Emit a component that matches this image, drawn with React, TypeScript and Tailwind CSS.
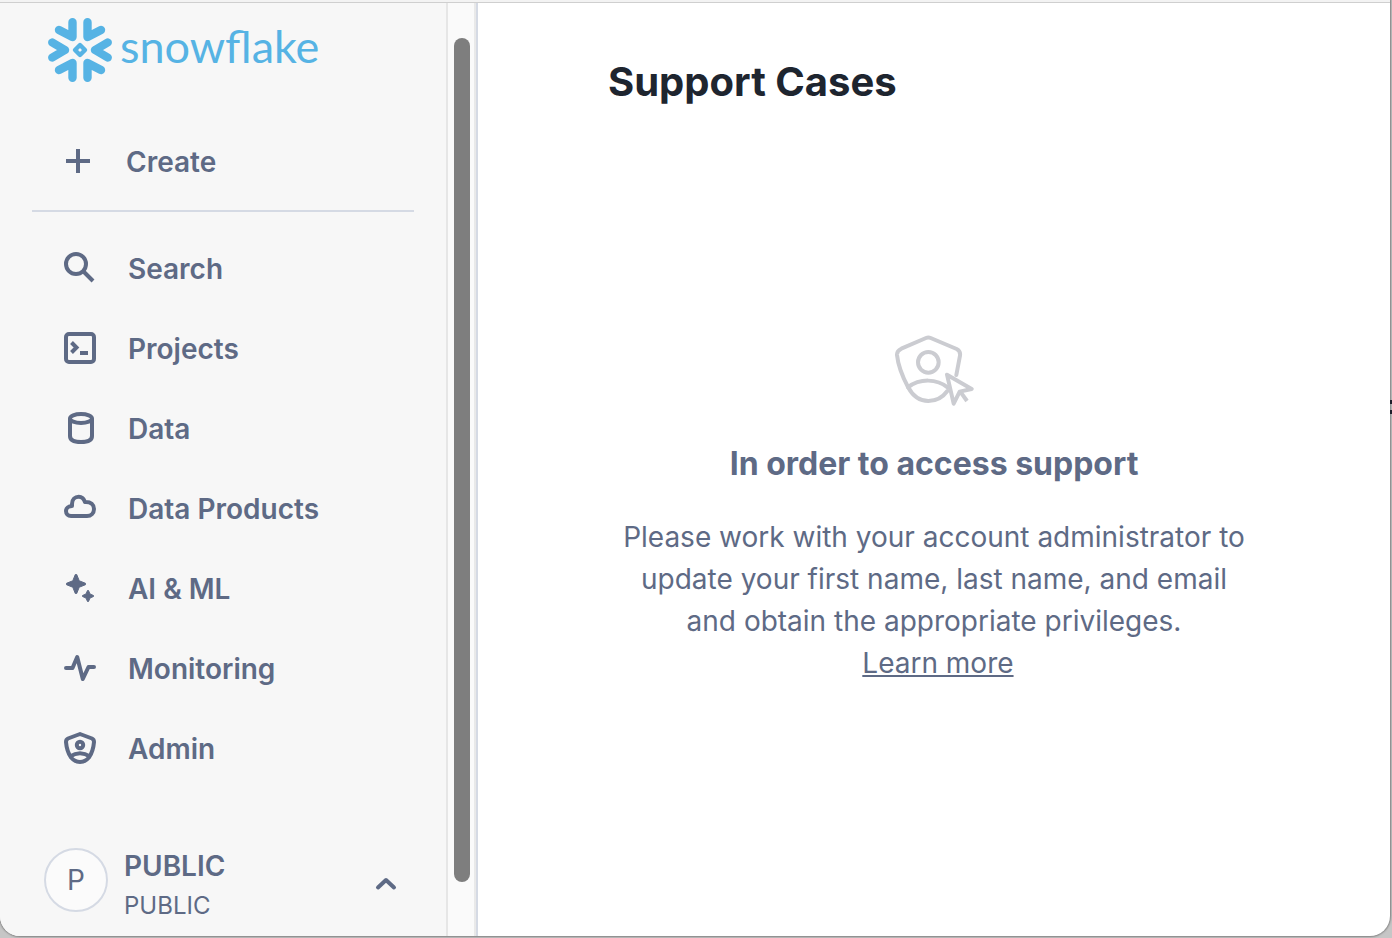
import type { ReactNode } from 'react';

type NavItem = {
  label: string;
  icon: ReactNode;
};

const NAV_ITEMS: NavItem[] = [
  {
    label: 'Search',
    icon: (
      <>
        <circle cx="12" cy="12" r="10" />
        <path d="M19 19L29 29" />
      </>
    ),
  },
  {
    label: 'Projects',
    icon: (
      <>
        <rect x="2" y="2" width="28" height="28" rx="3" />
        <path d="M7.5 10.5L12.5 15.5L7.5 20.5M16 21H24" />
      </>
    ),
  },
  {
    label: 'Data',
    icon: (
      <>
        <ellipse cx="17" cy="6.5" rx="11" ry="4.5" />
        <path d="M6 6.5V24C6 28 10 30 17 30S28 28 28 24V6.5" />
      </>
    ),
  },
  {
    label: 'Data Products',
    icon: (
      <path d="M7 24C4 24 2 21.8 2 19C2 16.2 4.5 14 8 14V12C8 7.5 11 4.8 14.8 4.8C18 4.8 20 7 21 10C27 9.6 30 13 30 17C30 21 27 24 23 24Z" strokeLinejoin="round" />
    ),
  },
  {
    label: 'AI & ML',
    icon: (
      <g fill="currentColor" strokeWidth="1" strokeLinejoin="round">
        <path d="M11.3 2.5H12.7L15 8.2Q15.3 8.7 15.8 9L21.5 11.3V12.7L15.8 15Q15.3 15.3 15 15.8L12.7 21.5H11.3L9 15.8Q8.7 15.3 8.2 15L2.5 12.7V11.3L8.2 9Q8.7 8.7 9 8.2Z" />
        <path d="M23.5 18.5H24.5L26 22L29.5 23.5V24.5L26 26L24.5 29.5H23.5L22 26L18.5 24.5V23.5L22 22Z" />
      </g>
    ),
  },
  {
    label: 'Monitoring',
    icon: (
      <path d="M2 16H8.5L13.2 5L18.8 27L24.5 15H30" strokeLinecap="round" strokeLinejoin="round" />
    ),
  },
  {
    label: 'Admin',
    icon: (
      <>
        <path d="M16 2L28 6.5Q30 7.5 30 10C29.5 16 28 21 25 25.5Q21 30 16 30T7 25.5C4 21 2.5 16 2 10Q2 7.5 4 6.5Z" strokeLinejoin="round" />
        <circle cx="16" cy="13" r="3.2" />
        <path d="M6 24.5Q16 18 26 24.5" />
      </>
    ),
  },
];

function Logo() {
  return (
    <a href="#" className="flex items-center gap-2 text-[#56b3e4]">
      <svg viewBox="0 0 64 64" className="size-16 shrink-0" fill="none" stroke="currentColor" strokeLinecap="round" strokeLinejoin="round" aria-hidden="true">
        <g strokeWidth="8.4">
          <path d="M24.5 4.3V19L11 12" />
          <path d="M39.5 4.3V19L53 12" />
          <path d="M24.5 59.7V45L11 52" />
          <path d="M39.5 59.7V45L53 52" />
          <path d="M4.3 24.5L17 32L4.3 39.5" />
          <path d="M59.7 24.5L47 32L59.7 39.5" />
        </g>
        <path d="M32 27L37 32L32 37L27 32Z" strokeWidth="4.4" />
      </svg>
      <span className="pb-2 font-[Lato] text-[45px] leading-none font-normal">snowflake</span>
    </a>
  );
}

function SupportIcon() {
  return (
    <svg viewBox="0 0 240 213" className="h-[71px] w-20" fill="none" stroke="#cbccd1" strokeWidth="12" strokeLinecap="round" strokeLinejoin="round" aria-hidden="true">
      <path d="M187 120L198 62Q200 48 188 42L110 9Q103 6 96 9L22 41Q8 48 9 60C12 88 26 126 42 156C58 186 80 198 103 198C126 198 144 190 160 168" />
      <circle cx="103" cy="82" r="31" />
      <path d="M42 157C77 130 128 130 162 158" />
      <path d="M159 119L233 162L197 170L179 206Z" fill="white" />
      <path d="M201 173L219 198" strokeLinecap="butt" />
    </svg>
  );
}

function Sidebar() {
  return (
    <aside className="flex w-[448px] shrink-0 flex-col border-r-2 border-[#e6e6e6] bg-[#f7f7f7] px-8 font-semibold">
      <div className="pt-[15px] pl-4">
        <Logo />
      </div>
      <button type="button" className="mt-[30px] flex h-[100px] items-center gap-9 border-b-2 border-[#d5dae4] pl-[34px] text-left">
        <svg viewBox="0 0 24 24" className="size-6" stroke="currentColor" strokeWidth="4" aria-hidden="true">
          <path d="M12 0V24M0 12H24" />
        </svg>
        <span className="pt-0.5">Create</span>
      </button>

      <nav className="mt-4">
        {NAV_ITEMS.map((item) => (
          <a key={item.label} href="#" className="flex h-20 items-center gap-8 pl-8">
            <svg viewBox="0 0 32 32" className="size-8" fill="none" stroke="currentColor" strokeWidth="4" aria-hidden="true">
              {item.icon}
            </svg>
            <span className="pt-0.5">{item.label}</span>
          </a>
        ))}
      </nav>

      <button type="button" className="mt-auto mb-2.5 flex items-center gap-4 pr-4 pl-3 text-left">
        <span className="mb-3 flex size-16 items-center justify-center rounded-full border-2 border-[#d5dae4] bg-[#fbfbfb] font-normal">
          P
        </span>
        <span className="flex-1">
          <span className="block leading-10">PUBLIC</span>
          <span className="block text-2xl leading-10 font-normal">PUBLIC</span>
        </span>
        <svg viewBox="0 0 24 24" className="mb-1 size-6" fill="none" stroke="currentColor" strokeWidth="4" strokeLinecap="round" strokeLinejoin="round" aria-hidden="true">
          <path d="M4 15.5L12 8L20 15.5" />
        </svg>
      </button>
    </aside>
  );
}

export default function App() {
  return (
    <div className="relative flex min-h-screen flex-col bg-[#c6c6c6] pr-0.5 pb-0.5 font-[Inter,sans-serif] text-[28px] text-[#5e6a85]">
      <div className="flex flex-1 flex-col overflow-hidden rounded-b-[20px] bg-white shadow-[0_0_2px_1px_#808080]">
        <div className="h-[3px] border-b border-[#cfcfcf] bg-[#f3f3f3]" />
        <div className="flex flex-1">
          <Sidebar />

          {/* scrollbar */}
          <div className="flex w-[30px] shrink-0 border-r-2 border-[#d5dae4] bg-[#fafafa]">
            <div className="flex flex-1 border-r-2 border-[#e9e9e9] pt-[35px] pr-1 pb-[54px] pl-1.5">
              <div className="flex-1 rounded-full bg-[#7e7e7e]" />
            </div>
          </div>

          <main className="flex-1">
            <h1 className="px-[130px] pt-[55px] text-[40px] leading-12 font-bold text-[#1e252f]">Support Cases</h1>
            <section className="mx-auto mt-[229px] flex max-w-[640px] flex-col items-center text-center">
              <SupportIcon />
              <h2 className="mt-[38px] text-[32px] leading-10 font-bold">In order to access support</h2>
              <p className="mt-8 leading-[42px]">
                Please work with your account administrator to update your first name, last name, and email and obtain
                the appropriate privileges.
                <br />
                &nbsp;<a href="#" className="underline">Learn more</a>
              </p>
            </section>
          </main>
        </div>
      </div>
      {/* sliver of the page behind the window */}
      <div className="absolute top-[400px] right-0 h-3.5 w-0.5 border-y-4 border-[#20202c]" />
    </div>
  );
}
